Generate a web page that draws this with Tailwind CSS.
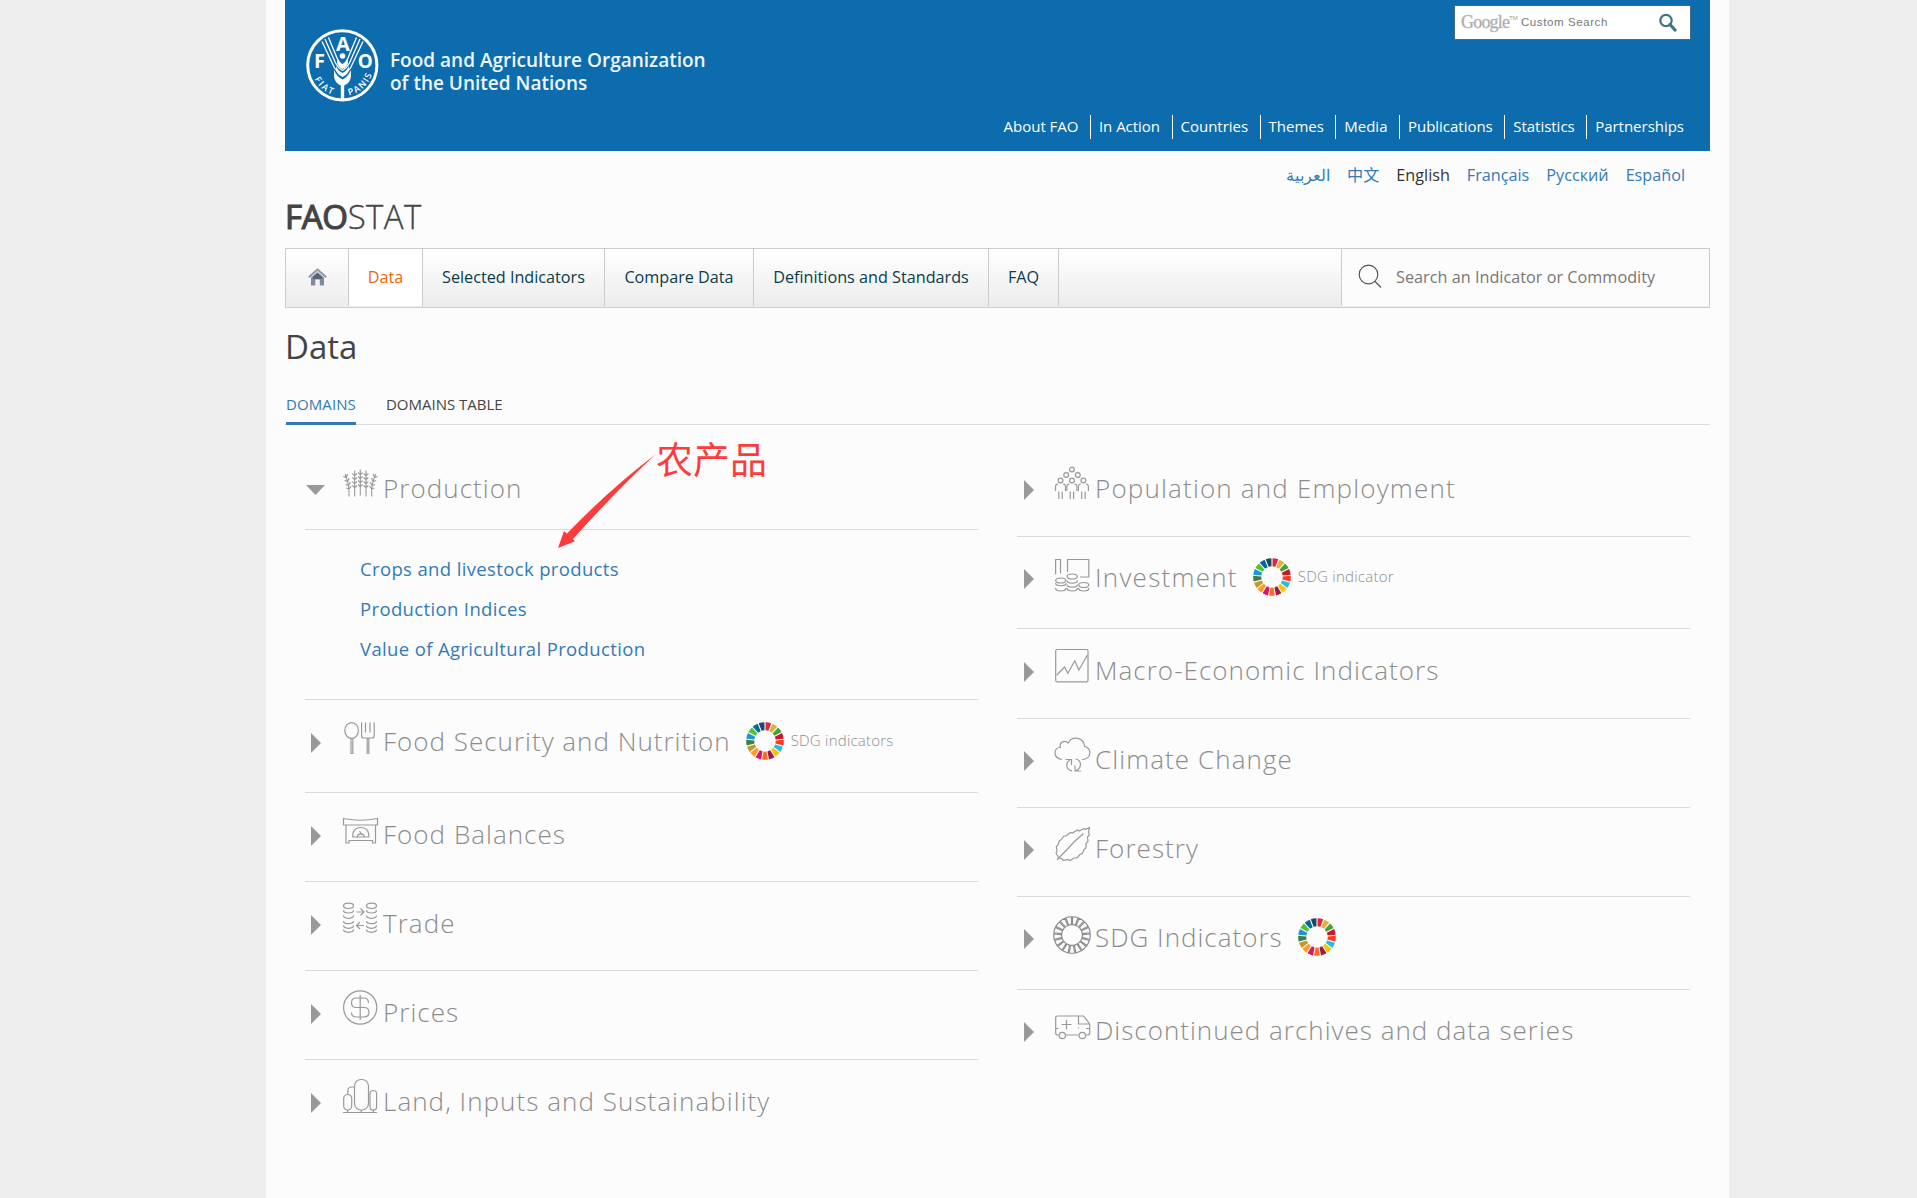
<!DOCTYPE html>
<html lang="en">
<head>
<meta charset="utf-8">
<title>FAOSTAT</title>
<script src="https://cdn.jsdelivr.net/npm/@tailwindcss/browser@4"></script>
</head>
<body class="bg-[#eeeeee] font-['Open_Sans','Noto_Sans_CJK_SC',sans-serif] text-[#444]">
<svg class="hidden">
  <defs>
    <path id="seg" d="M-2.9-18.6A18.8 18.8 0 0 1 2.9-18.6L1.45-10.6A10.7 10.7 0 0 0-1.45-10.6Z"/>
    <g id="stalk"><path d="M0 30V4M-2.300 7L0 9.300L2.300 7M-2.300 11L0 13.300L2.300 11M-2.300 15L0 17.300L2.300 15M-2.300 19L0 21.300L2.300 19"/></g>
    <g id="coins"><ellipse cx="5.500" cy="5.500" rx="5" ry="2.700"/><path d="M.5 10c0 3.600 10 3.600 10 0M.5 15.300c0 3.600 10 3.600 10 0M.5 20.600c0 3.600 10 3.600 10 0M.5 25.300c0 3.600 10 3.600 10 0M.5 29.300c0 3.600 10 3.600 10 0"/></g>
    <g id="person"><circle cx="0" cy="0" r="2.400"/><path d="M-5 10.500V6.500C-5 3.500-3.600 3.600-2.500 3.600M5 10.500V6.500C5 3.500 3.600 3.600 2.500 3.600M-1.700 11V18.500M1.700 11V18.500"/></g>
  </defs>
</svg>
<div class="ml-[266px] h-[1198px] w-[1463px] overflow-hidden bg-[#fcfcfc] pl-[19px]">
  <div class="w-[1425px]">
    <header class="flex h-[151px] justify-between bg-[#0d6cad] text-white">
      <div class="flex pt-[29px] pl-[21px]">
        <svg class="size-[73px] shrink-0" viewBox="0 0 73 73" fill="none" stroke="#fff">
          <circle cx="36.300" cy="36.300" r="34.600" stroke-width="3"/>
          <path stroke-width="1.300" d="M16 12.500L28.500 39Q31 43 36.500 46M19 10L29.500 34Q32 39 36.500 41.500M22.500 8.500L31 29Q33 34 36.500 36M57 12.500L44.500 39Q42 43 36.500 46M54 10L43.500 34Q41 39 36.500 41.500M50.500 8.500L42 29Q40 34 36.500 36"/>
          <circle cx="36.500" cy="27" r="2.800" fill="#fff" stroke="none"/>
          <path fill="#fff" stroke="none" d="M31.500 29.500Q33 34 36.500 35.500Q40 34 41.500 29.500L42 34Q40.500 38.500 36.500 40Q32.500 38.500 31 34ZM30 37Q32 42 36.500 44Q41 42 43 37V41.500Q41 46 36.500 48Q32 46 30 41.500ZM28 41Q31 48 36.500 50.500Q42 48 45 41V47Q44.500 54 38.200 56.500V70H34.800V56.500Q28.500 54 28 47Z"/>
          <g fill="#fff" stroke="none" class="font-['Open_Sans',sans-serif] font-bold">
            <text x="8" y="38.700" font-size="20">F</text>
            <text x="36.800" y="22" font-size="20" text-anchor="middle">A</text>
            <text x="51.800" y="38.900" font-size="20" textLength="15" lengthAdjust="spacingAndGlyphs">O</text>
          </g>
          <path id="fiat" stroke="none" d="M8.300 50A31.200 31.200 0 0 0 34 67"/>
          <path id="panis" stroke="none" d="M43 66.300A31.200 31.200 0 0 0 67 41"/>
          <g fill="#fff" stroke="none" class="font-['Open_Sans',sans-serif] font-semibold" font-size="9">
            <text><textPath href="#fiat" textLength="24">FIAT</textPath></text>
            <text><textPath href="#panis" textLength="32">PANIS</textPath></text>
          </g>
        </svg>
        <div class="ml-[11px] pt-[20px] text-[19px] leading-[23px] font-semibold text-[#eef6fc]">Food and Agriculture Organization<br>of the United Nations</div>
      </div>
      <div class="flex flex-col items-end pt-[5px] pr-[19px]">
        <div class="flex h-[35px] w-[237px] items-center border border-[#4a6a80] bg-white pl-[6px]">
          <span class="font-['Liberation_Serif',serif] text-[18px] tracking-[-0.8px] text-[#aaa] [-webkit-text-stroke:0.4px_#bbb]">Google</span>
          <span class="-mt-2 text-[6px] text-[#999]">TM</span>
          <span class="ml-[3px] font-['Liberation_Sans',sans-serif] text-[11.5px] tracking-[0.6px] text-[#777]">Custom Search</span>
          <svg class="ml-auto mr-[13px] h-[19px] w-[19px]" viewBox="0 0 19 19" fill="none" stroke="#3f7480"><circle cx="8" cy="7.500" r="5.700" stroke-width="2.200"/><path d="M12 11.500L17 17" stroke-width="3.200" stroke-linecap="round"/></svg>
        </div>
        <nav class="mt-[75px] -mr-[5px] flex h-[24px] divide-x divide-white text-[15px] leading-[23px] tracking-[-0.02px]">
          <a class="pr-[11.5px]">About FAO</a><a class="pr-[11.5px] pl-2">In Action</a><a class="pr-[11.5px] pl-2">Countries</a><a class="pr-[11.5px] pl-2">Themes</a><a class="pr-[11.5px] pl-2">Media</a><a class="pr-[11.5px] pl-2">Publications</a><a class="pr-[11.5px] pl-2">Statistics</a><a class="pr-3 pl-2">Partnerships</a>
        </nav>
      </div>
    </header>
    <div class="flex h-[45px] justify-end gap-[17px] pt-[12px] pr-[25px] text-[16.2px] leading-6 text-[#337ab7]">
      <a>العربية</a><a>中文</a><a class="text-[#333]">English</a><a>Français</a><a>Русский</a><a>Español</a>
    </div>
    <h1 class="h-[52px] text-[33px] leading-[42px] text-[#444]"><span class="tracking-[-0.3px] [-webkit-text-stroke:1.2px_#444]">FAO</span><span class="font-light tracking-[0.4px] [-webkit-text-stroke:0.3px_#444]">STAT</span></h1>
    <nav class="flex h-[60px] border border-[#ccc] bg-[#eee] pb-[1px] text-[16.2px] leading-[57px] text-[#0b3c49]">
      <div class="flex flex-1 divide-x divide-[#ccc] bg-linear-to-b from-white to-[#ececec]">
        <a class="flex w-[63px] items-center justify-center pb-[2px]">
          <svg class="h-[18px] w-[19px]" viewBox="0 0 19 18"><path d="M3 9.500L9.500 4L16 9.500V17.500H11.800V11.500H7.300V17.500H3Z" fill="#7d8b9b"/><path d="M5 9L9.500 5L14 9V11H5Z" fill="#56667a"/><path d="M.8 9.200L9.500 1.500L18.200 9.200" fill="none" stroke="#8b97a4" stroke-width="2"/></svg>
        </a>
        <a class="w-[74px] bg-white text-center text-[#f0640a]">Data</a>
        <a class="w-[182px] text-center">Selected Indicators</a>
        <a class="w-[149px] text-center">Compare Data</a>
        <a class="w-[235px] text-center">Definitions and Standards</a>
        <a class="w-[70px] text-center">FAQ</a>
        <span class="flex-1"></span>
      </div>
      <div class="flex w-[368px] items-center border-l border-[#ccc] bg-[#fcfcfc] pl-[16px] tracking-[0.03px] text-[#777]">
        <svg class="mr-[14px] -mt-[4px] size-[24px]" viewBox="0 0 24 24" fill="none" stroke="#555" stroke-width="1.200"><circle cx="10.500" cy="10.500" r="9.300"/><path d="M17 17.500L23 23.500"/></svg>
        Search an Indicator or Commodity
      </div>
    </nav>
    <h2 class="mt-[16px] h-[48px] text-[33px] leading-[46px]">Data</h2>
    <div class="mt-[20px] flex h-[33px] gap-[30px] border-b border-[#ddd] pl-[1px] text-[15px] leading-[24px]">
      <a class="h-[33px] border-b-3 border-[#337ab7] text-[#337ab7] tracking-[0.1px]">DOMAINS</a><a>DOMAINS TABLE</a>
    </div>

    <main class="flex gap-[39px] pl-[20px] font-light text-[#8c8c8c]">
      <div class="w-[673px]">
        <section class="flex h-[104px] items-start pt-[40px]">
          <svg class="mt-[20px] ml-[1px] h-[10px] w-[19px]" viewBox="0 0 19 10"><path d="M0 0H19L9.500 10Z" fill="#999"/></svg>
          <svg class="ml-[18px] h-[38px] w-[38px] overflow-visible" viewBox="0 0 38 38" fill="none" stroke="#999" stroke-width="1.100"><use href="#stalk" x="17.300" y=".5"/><use href="#stalk" x="11.700" y="1.500"/><use href="#stalk" x="23" y="1.500"/><path d="M6 31.500V24Q5.500 17 2 9M.2 11.500L3.300 12.500L4.500 9M1.500 15.500L4.500 16.500L6.300 13M2.500 19.500L5.500 20.500L7.500 17M3.500 23L6 24L8.200 21M28.700 31.500V24Q29.200 17 32.700 9M34.500 11.500L31.400 12.500L30.200 9M33.200 15.500L30.200 16.500L28.400 13M32.200 19.500L29.200 20.500L27.200 17M31.200 23L28.700 24L26.500 21"/></svg>
          <h3 class="mt-[4.500px] ml-[2px] text-[26px] leading-9 tracking-[1.05px]">Production</h3>
        </section>
        <ul class="flex h-[170px] flex-col border-t border-[#d8dadc] pt-[19px] pl-[55px] text-[18.5px] leading-10 font-normal tracking-[0.36px] text-[#337ab7]">
          <li>Crops and livestock products</li><li>Production Indices</li><li>Value of Agricultural Production</li>
        </ul>
        <section class="flex h-[93px] items-start border-t border-[#d8dadc] pt-[19px]">
          <svg class="mt-[14px] ml-[6px] h-[20px] w-[10px]" viewBox="0 0 10 20"><path d="M0 0L10 10L0 20Z" fill="#999"/></svg>
          <svg class="ml-[22px] h-[38px] w-[38px] overflow-visible" viewBox="0 0 38 38" fill="none" stroke="#999" stroke-width="1.200"><ellipse cx="8.600" cy="11.500" rx="6.800" ry="7.900"/><path d="M8 19.500V34.500H9.800V19.500M18.600 3.500V17Q18.600 19 20.500 19H29.200Q31.200 19 31.200 17V3.500M22.500 3.500V13.500M27 3.500V13.500M24.200 19V35M25.800 19V35"/></svg>
          <h3 class="mt-[4px] ml-[2px] text-[26px] leading-9 tracking-[1px]">Food Security and Nutrition</h3>
          <svg class="wheel mt-[3px] ml-[15px] size-[38px]" viewBox="-19 -19 38 38"></svg>
          <span class="mt-[9px] ml-[7px] text-[15px] leading-6 tracking-[0.22px]">SDG indicators</span>
        </section>
        <section class="flex h-[89px] items-start border-t border-[#d8dadc] pt-[19px]">
          <svg class="mt-[14px] ml-[6px] h-[20px] w-[10px]" viewBox="0 0 10 20"><path d="M0 0L10 10L0 20Z" fill="#999"/></svg>
          <svg class="ml-[22px] h-[38px] w-[38px] overflow-visible" viewBox="0 0 38 38" fill="none" stroke="#999" stroke-width="1.200"><path d="M.5 6.500Q17.500 10 34.500 6.500V13H.5ZM3 13V31H6V28.500H29.500V31H32.500V13M9.800 25V22Q11 15.500 17.800 15.500Q24.600 15.500 25.800 22V25ZM14 25Q14.500 22 17.800 21.800Q21 22 21.500 25M16.500 19L19 23"/></svg>
          <h3 class="mt-[4px] ml-[2px] text-[26px] leading-9 tracking-[1.02px]">Food Balances</h3>
        </section>
        <section class="flex h-[89px] items-start border-t border-[#d8dadc] pt-[19px]">
          <svg class="mt-[14px] ml-[6px] h-[20px] w-[10px]" viewBox="0 0 10 20"><path d="M0 0L10 10L0 20Z" fill="#999"/></svg>
          <svg class="ml-[22px] h-[38px] w-[38px] overflow-visible" viewBox="0 0 38 38" fill="none" stroke="#999" stroke-width="1.200"><use href="#coins" y="-.7"/><use href="#coins" x="23" y="-.7"/><path d="M13.500 11H20.500M17.500 7.500L21 11L17.500 14.500M21 24.500H14M17 21L13.500 24.500L17 28"/></svg>
          <h3 class="mt-[4px] ml-[2px] text-[26px] leading-9 tracking-[1.05px]">Trade</h3>
        </section>
        <section class="flex h-[89px] items-start border-t border-[#d8dadc] pt-[19px]">
          <svg class="mt-[14px] ml-[6px] h-[20px] w-[10px]" viewBox="0 0 10 20"><path d="M0 0L10 10L0 20Z" fill="#999"/></svg>
          <svg class="ml-[22px] h-[38px] w-[38px] overflow-visible" viewBox="0 0 38 38" fill="none" stroke="#999" stroke-width="1.200"><circle cx="17.200" cy="17.500" r="16.600"/><path d="M17.200 5V30M25.500 13Q25.500 8 20.500 8H13.500Q8.500 8 8.500 12.700Q8.500 17.500 13.500 17.500H21Q26 17.500 26 22.300Q26 27 21 27H13.500Q8.500 27 8.500 22.500"/></svg>
          <h3 class="mt-[4px] ml-[2px] text-[26px] leading-9 tracking-[1.05px]">Prices</h3>
        </section>
        <section class="flex h-[89px] items-start border-t border-[#d8dadc] pt-[19px]">
          <svg class="mt-[14px] ml-[6px] h-[20px] w-[10px]" viewBox="0 0 10 20"><path d="M0 0L10 10L0 20Z" fill="#999"/></svg>
          <svg class="ml-[22px] h-[38px] w-[38px] overflow-visible" viewBox="0 0 38 38" fill="none" stroke="#999" stroke-width="1.200"><rect x="11.500" y=".5" width="14" height="30.500" rx="6.500"/><rect x=".7" y="15.500" width="8" height="15.500" rx="4"/><rect x="27" y="11.500" width="6.600" height="19.500" rx="3.300"/><path d="M4.800 15V12Q4.800 8 9 8H11M0 33.500H34M4.700 31V33.500M18.300 31V33.500M30.300 31V33.500"/></svg>
          <h3 class="mt-[4px] ml-[2px] text-[26px] leading-9 tracking-[1.05px]">Land, Inputs and Sustainability</h3>
        </section>
      </div>

      <div class="w-[673px]">
        <section class="flex h-[111px] items-start pt-[40px]">
          <svg class="mt-[15px] ml-[7px] h-[20px] w-[10px]" viewBox="0 0 10 20"><path d="M0 0L10 10L0 20Z" fill="#999"/></svg>
          <svg class="ml-[21px] h-[38px] w-[38px] overflow-visible" viewBox="0 0 38 38" fill="none" stroke="#999" stroke-width="1.200"><circle cx="16.900" cy="4.500" r="2.400"/><circle cx="11.200" cy="10" r="2.400"/><circle cx="22.800" cy="10" r="2.400"/><use href="#person" x="5.500" y="15.500"/><use href="#person" x="16.900" y="15.500"/><use href="#person" x="28.400" y="15.500"/></svg>
          <h3 class="mt-[4.500px] ml-[2px] text-[26px] leading-9 tracking-[1.18px]">Population and Employment</h3>
        </section>
        <section class="flex h-[92px] items-start border-t border-[#d8dadc] pt-[18px]">
          <svg class="mt-[14px] ml-[7px] h-[20px] w-[10px]" viewBox="0 0 10 20"><path d="M0 0L10 10L0 20Z" fill="#999"/></svg>
          <svg class="ml-[21px] h-[38px] w-[38px] overflow-visible" viewBox="0 0 38 38" fill="none" stroke="#999" stroke-width="1.200"><path d="M.6 19.500V4.500H5.500V18.500M12.500 17V4.500H33.800V22H25M.5 28c0 3.600 10.500 3.600 10.500 0M.5 33c0 4 10.500 4 10.500 0M12 25.500c0 3.600 10.500 3.600 10.500 0M12 29.500c0 3.600 10.500 3.600 10.500 0M12 33c0 4 10.500 4 10.500 0M23.500 33c0 4 10.500 4 10.500 0"/><ellipse cx="5.700" cy="25.500" rx="5" ry="2.500"/><ellipse cx="17.200" cy="21.500" rx="5" ry="2.500"/><ellipse cx="28.700" cy="30" rx="5" ry="2.500"/></svg>
          <h3 class="mt-[4px] ml-[2px] text-[26px] leading-9 tracking-[1.25px]">Investment</h3>
          <svg class="wheel mt-[3px] ml-[15px] size-[38px]" viewBox="-19 -19 38 38"></svg>
          <span class="mt-[9px] ml-[7px] text-[15px] leading-6 tracking-[0.25px]">SDG indicator</span>
        </section>
        <section class="flex h-[90px] items-start border-t border-[#d8dadc] pt-[19px]">
          <svg class="mt-[14px] ml-[7px] h-[20px] w-[10px]" viewBox="0 0 10 20"><path d="M0 0L10 10L0 20Z" fill="#999"/></svg>
          <svg class="ml-[21px] h-[38px] w-[38px] overflow-visible" viewBox="0 0 38 38" fill="none" stroke="#999" stroke-width="1.200"><rect x=".7" y="1.500" width="32.300" height="32.300" rx="1.500"/><path d="M1.800 27L9.500 19L12.800 25.300L19.800 12.800L23.800 22L32.500 7"/></svg>
          <h3 class="mt-[4px] ml-[2px] text-[26px] leading-9 tracking-[1.04px]">Macro-Economic Indicators</h3>
        </section>
        <section class="flex h-[89px] items-start border-t border-[#d8dadc] pt-[18px]">
          <svg class="mt-[14px] ml-[7px] h-[20px] w-[10px]" viewBox="0 0 10 20"><path d="M0 0L10 10L0 20Z" fill="#999"/></svg>
          <svg class="ml-[21px] h-[38px] w-[38px] overflow-visible" viewBox="0 0 38 38" fill="none" stroke="#999" stroke-width="1.200"><path d="M7 22.500C-3 21-1 10 5.200 10.500C4 5 9.500 2.500 13.200 6C17-1.500 29 0 29.500 9.500C37 10.500 37 22 27 22.500M10.500 22.500H16.500V28M15 23C10 26 11 33 17 33.800M26 34H20V28.500M20.500 22C27 23 27 31 21 33.500"/></svg>
          <h3 class="mt-[4px] ml-[2px] text-[26px] leading-9 tracking-[1.08px]">Climate Change</h3>
        </section>
        <section class="flex h-[89px] items-start border-t border-[#d8dadc] pt-[18px]">
          <svg class="mt-[14px] ml-[7px] h-[20px] w-[10px]" viewBox="0 0 10 20"><path d="M0 0L10 10L0 20Z" fill="#999"/></svg>
          <svg class="ml-[21px] h-[38px] w-[38px] overflow-visible" viewBox="0 0 38 38" fill="none" stroke="#999" stroke-width="1.200"><path d="M34.500 1.500L30 3.500L29 2.500L24 5L22.500 4L17.500 7L15.500 6.500L11 10L9 10L6 14L4.500 14.500L3 19L1.300 20.500L2 25L1 27L3.500 31.500L7 33L8.500 34.500L12.500 33.500L15 34.500L19 32L22 32L25 28.500L27.500 27.500L29 23.500L31 22L31 17.500L33 15.500L32.500 11L34.300 9L33.500 6ZM2 34L12 23.500L19.500 15.500L28.500 7.500"/></svg>
          <h3 class="mt-[4px] ml-[2px] text-[26px] leading-9 tracking-[1.05px]">Forestry</h3>
        </section>
        <section class="flex h-[93px] items-start border-t border-[#d8dadc] pt-[18px]">
          <svg class="mt-[14px] ml-[7px] h-[20px] w-[10px]" viewBox="0 0 10 20"><path d="M0 0L10 10L0 20Z" fill="#999"/></svg>
          <svg class="outline-wheel mt-[1px] ml-[19px] mr-[2px] size-[38px] overflow-visible" viewBox="-19 -19 38 38" fill="none" stroke="#8c8c8c" stroke-width="1.200"></svg>
          <h3 class="mt-[4px] ml-[2px] text-[26px] leading-9 tracking-[1px]">SDG Indicators</h3>
          <svg class="wheel mt-[3px] ml-[15px] size-[38px]" viewBox="-19 -19 38 38"></svg>
        </section>
        <section class="flex h-[89px] items-start border-t border-[#d8dadc] pt-[18px]">
          <svg class="mt-[14px] ml-[7px] h-[20px] w-[10px]" viewBox="0 0 10 20"><path d="M0 0L10 10L0 20Z" fill="#999"/></svg>
          <svg class="ml-[21px] h-[38px] w-[38px] overflow-visible" viewBox="0 0 38 38" fill="none" stroke="#999" stroke-width="1.200"><path d="M3.500 27H2.500Q.7 27 .7 25V10Q.7 8 2.500 8H28.500L34.700 16V25Q34.700 27 32.500 27H31M11 27H23.500M23.500 8V16H34.500M.7 20.500H3.500M34.500 20.500H31M11.500 12V21.500M6.500 16.500H16.500M23.500 19.500V20.500"/><circle cx="7.300" cy="27.500" r="3.200"/><circle cx="27.300" cy="27.500" r="3.200"/></svg>
          <h3 class="mt-[4px] ml-[2px] text-[26px] leading-9 tracking-[1px]">Discontinued archives and data series</h3>
        </section>
      </div>
    </main>
  </div>
</div>

<svg class="absolute top-[450px] left-[555px] h-[100px] w-[104px]" viewBox="555 450 104 100"><path d="M564 531L558 548L575 541.300Z" fill="#fd3b3b"/><path d="M655.500 454.500Q612 487 566.500 534L572.500 539.500Q617 490 655.500 454.500Z" fill="#fd3b3b"/></svg>
<div class="absolute top-[432px] left-[656px] font-['Noto_Sans_CJK_SC',sans-serif] text-[37px] leading-[52px] text-[#fd3b3b]">农产品</div>

<script>
  const colors = ['#e5243b','#e0b23a','#4c9f38','#c5192d','#ff3a21','#26bde2','#fcc30b','#a21942','#fd6925','#dd1367','#fd9d24','#c6972e','#3f7e44','#1a97d9','#56c02b','#00689d','#19486a'];
  const ring = fill => colors.map((c, i) => `<use href="#seg" ${fill ? `fill="${c}"` : ''} transform="rotate(${(i + 0.5) * 360 / 17})"/>`).join('');
  document.querySelectorAll('.wheel').forEach(w => { w.innerHTML = ring(true); });
  document.querySelector('.outline-wheel').innerHTML = '<g transform="scale(.97)">' + ring(false) + '</g>';
</script>
</body>
</html>
